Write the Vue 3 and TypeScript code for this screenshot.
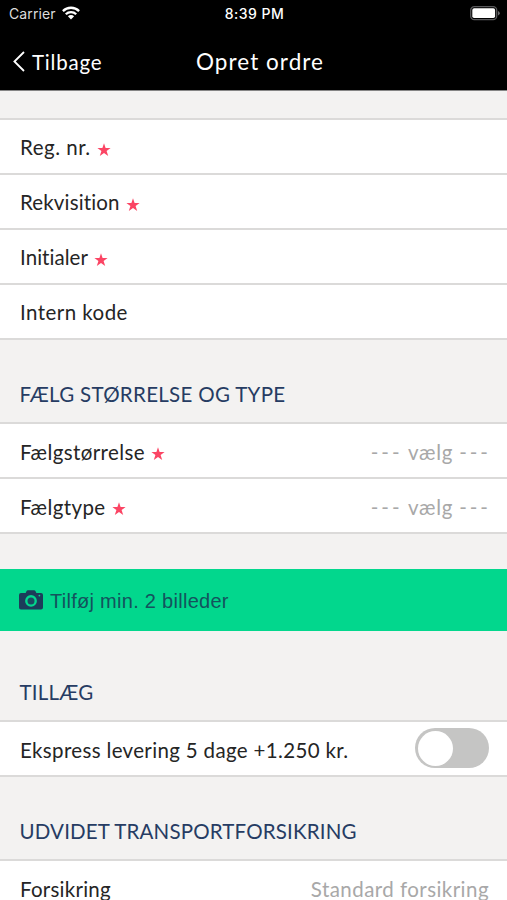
<script setup lang="ts">
import { ref } from 'vue'

interface Field {
  label: string
  key: string
  required?: boolean
  value?: string
}

const details: Field[] = [
  { label: 'Reg. nr.', key: 'reg', required: true },
  { label: 'Rekvisition', key: 'rekvisition', required: true },
  { label: 'Initialer', key: 'initialer', required: true },
  { label: 'Intern kode', key: 'kode' },
]
const rims: Field[] = [
  { label: 'Fælgstørrelse', key: 'size', required: true, value: 'vælg' },
  { label: 'Fælgtype', key: 'type', required: true, value: 'vælg' },
]
const express = ref(false)
</script>

<template>
  <main class="screen">
    <header class="top">
      <div class="status">
        <div class="carrier">
          <span>Carrier</span>
          <svg class="wifi" width="18" height="14" viewBox="0 0 18 14">
            <g fill="none" stroke="#fff" stroke-width="2.3">
              <path d="M.9 5.1a11.5 11.5 0 0 1 16.2 0" />
              <path d="M3.8 8.2a7.4 7.4 0 0 1 10.4 0" />
            </g>
            <path d="M5.9 10.3a4.4 4.4 0 0 1 6.2 0L9 13.5z" fill="#fff" />
          </svg>
        </div>
        <time class="clock">8:39 PM</time>
        <svg class="battery" width="30" height="15" viewBox="0 0 30 15">
          <rect x=".7" y=".7" width="26" height="13" rx="3.6" fill="none" stroke="#59595b" stroke-width="1.3" />
          <rect x="2.3" y="2.3" width="22.8" height="9.8" rx="1.8" fill="#fff" />
          <path d="M28 5q1.8.7 1.8 2.2T28 9.4z" fill="#6b6b6d" />
        </svg>
      </div>
      <nav class="bar">
        <button class="back" type="button">
          <svg width="12" height="21" viewBox="0 0 12 21">
            <path d="M11 1 1.4 10.5 11 20" fill="none" stroke="#fff" stroke-width="1.8" />
          </svg>
          <span>Tilbage</span>
        </button>
        <h1 class="title">Opret ordre</h1>
      </nav>
    </header>

    <section class="group first">
      <div v-for="f in details" :key="f.key" class="row">
        <span class="label" :class="f.key">{{ f.label }}</span>
        <svg v-if="f.required" class="star" width="14" height="14" viewBox="0 0 14 14">
          <path d="M7 .3 8.6 5.1h5L9.6 8.1l1.6 5L7 10.1l-4.2 3 1.6-5L.4 5.1h5z" />
        </svg>
      </div>
    </section>

    <h2 class="heading h-rims"><span>FÆLG STØRRELSE OG TYPE</span></h2>
    <section class="group">
      <div v-for="f in rims" :key="f.key" class="row">
        <span class="label" :class="f.key">{{ f.label }}</span>
        <svg v-if="f.required" class="star" width="14" height="14" viewBox="0 0 14 14">
          <path d="M7 .3 8.6 5.1h5L9.6 8.1l1.6 5L7 10.1l-4.2 3 1.6-5L.4 5.1h5z" />
        </svg>
        <span class="value pick"><span class="dashes">---</span> {{ f.value }} <span class="dashes">---</span></span>
      </div>
    </section>

    <button class="photos" type="button">
      <svg width="24" height="20" viewBox="0 0 24 20">
        <path
          fill="#1c3d5a" fill-rule="evenodd"
          d="M2 3h4.600l1-2Q8 .3 8.800.3h6.400q.8 0 1.200.7l1 2H22q2 0 2 2v12.500q0 2-2 2H2q-2 0-2-2V5q0-2 2-2zM12 5a5.900 5.900 0 1 0 0 11.800a5.900 5.900 0 1 0 0-11.800zM20.400 4.700a.9.9 0 1 0 0 1.800a.9.9 0 1 0 0-1.800z"
        />
        <circle cx="12" cy="10.900" r="3.500" fill="#1c4a62" />
      </svg>
      <span>Tilføj min. 2 billeder</span>
    </button>

    <h2 class="heading h-extra"><span>TILLÆG</span></h2>
    <section class="group">
      <div class="row">
        <span class="label express">Ekspress levering 5 dage +1.250 kr.</span>
        <button class="toggle" :class="{ on: express }" type="button" role="switch" :aria-checked="express" @click="express = !express">
          <span class="knob"></span>
        </button>
      </div>
    </section>

    <h2 class="heading h-insurance"><span>UDVIDET TRANSPORTFORSIKRING</span></h2>
    <section class="group">
      <div class="row">
        <span class="label forsikring">Forsikring</span>
        <span class="value standard">Standard forsikring</span>
      </div>
    </section>
  </main>
</template>

<style>
body {
  margin: 0;
  background: #f3f2f1;
}
</style>

<style scoped>
.screen {
  height: 900px;
  overflow: hidden;
  background: #f3f2f1;
  font-family: Lato, 'Open Sans', sans-serif;
  font-variant-ligatures: none;
  color: #252525;
}
.top {
  height: 90px;
  background: #000;
  color: #fff;
  border-bottom: 1px solid #858585;
}
.status {
  display: grid;
  grid-template-columns: 1fr auto 1fr;
  align-items: center;
  height: 28px;
  padding: 0 7px 0 9px;
  box-sizing: border-box;
  font: 14px/28px Inter, sans-serif;
}
.carrier {
  display: flex;
  align-items: center;
  gap: 6px;
  color: #ddd;
  letter-spacing: 0.1px;
}
.wifi {
  margin-top: -2px;
}
.clock {
  font-weight: 500;
  font-size: 14px;
  letter-spacing: 0.5px;
}
.battery {
  justify-self: end;
  margin-top: -2px;
}
.bar {
  display: grid;
  grid-template-columns: 196px 1fr;
  height: 62px;
}
button {
  border: 0;
  padding: 0;
  background: none;
  font-family: inherit;
  color: inherit;
}
.back {
  display: flex;
  align-items: center;
  gap: 7px;
  height: 67px;
  padding-left: 13px;
  font-size: 20.5px;
  letter-spacing: 0.8px;
}
.title {
  margin: 0;
  font-size: 22.5px;
  line-height: 68px;
  font-weight: 400;
  letter-spacing: 1.05px;
}
.group {
  border-top: 2px solid #dbdad9;
}
.first {
  margin-top: 27px;
}
.row {
  display: flex;
  align-items: center;
  height: 55px;
  box-sizing: border-box;
  padding: 2px 18px 0 20px;
  background: #fff;
  border-bottom: 2px solid #dbdad9;
  font-size: 20.5px;
  white-space: pre;
}
.first .row {
  padding-top: 0;
}
.reg {
  letter-spacing: 0.5px;
}
.rekvisition {
  letter-spacing: 0.15px;
}
.initialer {
  letter-spacing: 0.05px;
}
.kode {
  letter-spacing: 0.45px;
}
.size,
.type {
  letter-spacing: 0.4px;
}
.express {
  letter-spacing: 0.34px;
}
.forsikring {
  letter-spacing: 0.25px;
}
.standard {
  letter-spacing: 0.45px;
}
.pick {
  letter-spacing: 0.7px;
}
.dashes {
  letter-spacing: 3px;
}
.dashes:last-child {
  margin-right: -2px;
}
.star {
  margin: 5px 0 0 6px;
  fill: #fb4564;
}
.first .star {
  margin-top: 6px;
}
.value {
  margin-left: auto;
  color: #a8a8a8;
}
.heading {
  display: flex;
  align-items: flex-end;
  box-sizing: border-box;
  height: 82px;
  margin: 0;
  padding: 0 19.5px 15px;
  font-size: 20.5px;
  line-height: 26px;
  font-weight: 400;
  color: #263c63;
}
.h-rims {
  letter-spacing: 0.3px;
}
.photos {
  display: flex;
  align-items: center;
  gap: 7px;
  width: 100%;
  height: 62px;
  margin-top: 35px;
  padding: 2px 19px 0;
  background: #02d78d;
  box-sizing: border-box;
  font: 20px 'Liberation Sans', sans-serif;
  letter-spacing: 0.28px;
  color: #14535d;
}
.photos svg {
  margin-top: -3px;
}
.h-extra {
  height: 89px;
  letter-spacing: 0.2px;
}
.h-insurance {
  letter-spacing: 0.17px;
}
.toggle {
  width: 74px;
  height: 40px;
  margin: -3px 0 0 auto;
  padding: 2px 3px;
  border-radius: 20px;
  background: #c5c5c4;
}
.toggle.on {
  background: #02d78d;
}
.knob {
  display: block;
  width: 35px;
  height: 35px;
  border-radius: 50%;
  background: #fff;
}
.toggle.on .knob {
  margin-left: auto;
}
</style>
